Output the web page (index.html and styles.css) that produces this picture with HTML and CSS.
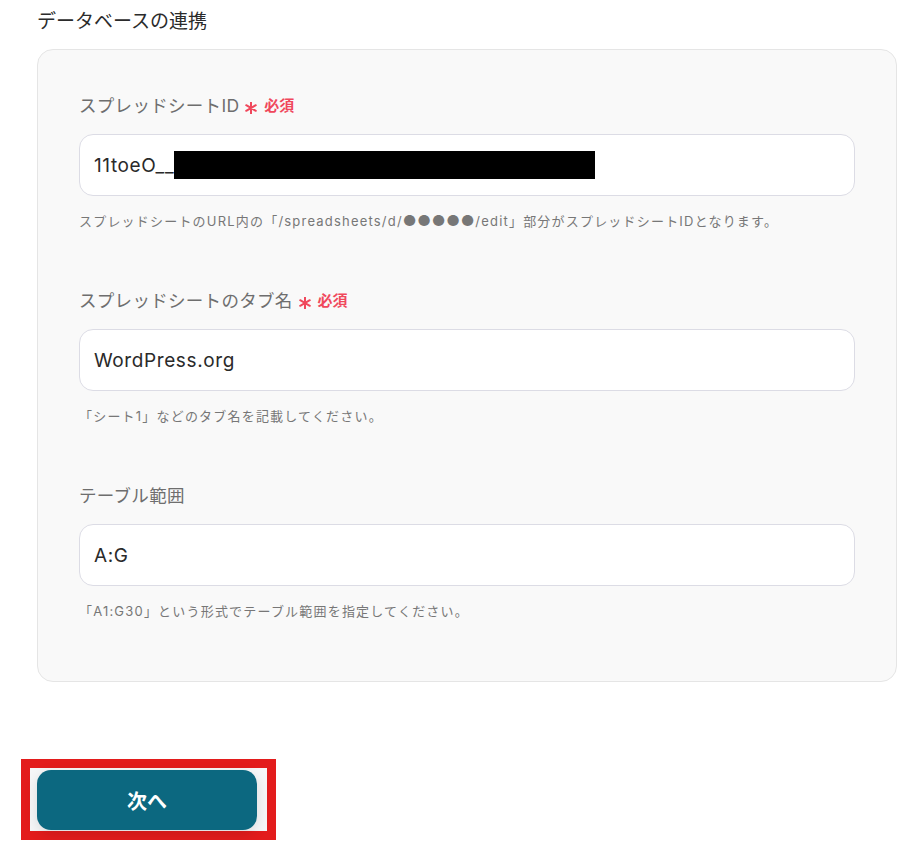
FILE: index.html
```html
<!DOCTYPE html>
<html lang="ja">
<head>
<meta charset="utf-8">
<link rel="stylesheet" href="styles.css">
</head>
<body>
<div class="page">
  <h2 class="title">データベースの連携</h2>
  <div class="card">
    <div class="field">
      <div class="label">スプレッドシートID<span class="req"><svg class="star" viewBox="0 0 12 12" width="12" height="12"><path d="M6 0.5V11.5M1.2 3.2L10.8 8.8M1.2 8.8L10.8 3.2" stroke="currentColor" stroke-width="2" stroke-linecap="round"/></svg>必須</span></div>
      <div class="input"><span>11toeO__</span><span class="redact"></span></div>
      <div class="help">スプレッドシートのURL内の「/spreadsheets/d/<span class="dots">●●●●●</span>/edit」部分がスプレッドシートIDとなります。</div>
    </div>
    <div class="field">
      <div class="label">スプレッドシートのタブ名<span class="req"><svg class="star" viewBox="0 0 12 12" width="12" height="12"><path d="M6 0.5V11.5M1.2 3.2L10.8 8.8M1.2 8.8L10.8 3.2" stroke="currentColor" stroke-width="2" stroke-linecap="round"/></svg>必須</span></div>
      <div class="input"><span>WordPress.org</span></div>
      <div class="help">「シート1」などのタブ名を記載してください。</div>
    </div>
    <div class="field">
      <div class="label">テーブル範囲</div>
      <div class="input"><span>A:G</span></div>
      <div class="help">「A1:G30」という形式でテーブル範囲を指定してください。</div>
    </div>
  </div>
  <div class="actions">
    <div class="highlight">
      <button class="next">次へ</button>
    </div>
  </div>
</div>
</body>
</html>
```

FILE: styles.css
```css
html, body {
  margin: 0;
  padding: 0;
  background: #ffffff;
}
body {
  font-family: "Inter", "Noto Sans CJK JP", sans-serif;
  color: #333;
}
.page {
  padding: 9px 26px 0 37px;
}
.title {
  margin: 0;
  font-size: 19px;
  line-height: 26px;
  font-weight: 400;
  color: #2b2b2b;
}
.card {
  margin-top: 14px;
  background: #f9f9f9;
  border: 1px solid #e5e5e5;
  border-radius: 16px;
  padding: 44px 41px 60px 41px;
  display: flex;
  flex-direction: column;
  gap: 58px;
}
.field {
  display: flex;
  flex-direction: column;
}
.label {
  font-size: 17.5px;
  line-height: 24px;
  font-weight: 400;
  color: #6e6e6e;
  letter-spacing: 0.3px;
  display: flex;
  align-items: center;
}
.req {
  color: #f0485c;
  font-size: 15px;
  font-weight: 700;
  margin-left: 6px;
  display: inline-flex;
  align-items: center;
  letter-spacing: 0;
}
.star {
  margin-right: 7px;
  position: relative;
  top: 2px;
}
.input {
  margin-top: 16px;
  height: 62px;
  box-sizing: border-box;
  background: #fff;
  border: 1px solid #dcdce5;
  border-radius: 14px;
  padding: 0 14px;
  display: flex;
  align-items: center;
  font-size: 19px;
  letter-spacing: 0.6px;
  color: #2a2a2a;
}
.redact {
  display: inline-block;
  width: 421px;
  height: 28px;
  background: #000;
  margin-top: -1px;
}
.help {
  margin-top: 15px;
  font-size: 13px;
  line-height: 20px;
  letter-spacing: 1.2px;
  color: #777;
}
.dots {
  font-size: 15px;
  letter-spacing: 0.8px;
}
.actions {
  margin-top: 77px;
  margin-left: -16px;
}
.highlight {
  display: inline-block;
  border: 9px solid #e31c1c;
  padding: 2px 10px 1px 7px;
  background: #f6f7f8;
}
.next {
  display: block;
  width: 220px;
  height: 60px;
  border: none;
  border-radius: 14px;
  background: #0c6880;
  color: #fff;
  font-family: "Noto Sans CJK JP", sans-serif;
  font-size: 20px;
  font-weight: 700;
  box-shadow: 0 4px 14px rgba(0, 0, 0, 0.12);
}
```
